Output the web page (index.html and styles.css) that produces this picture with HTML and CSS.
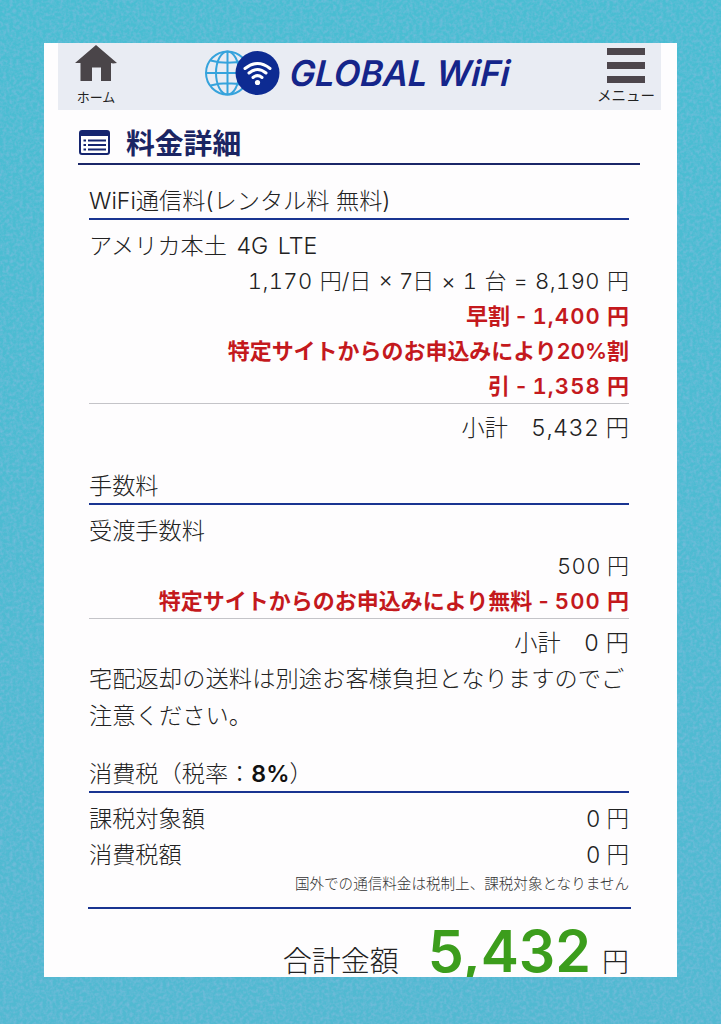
FILE: index.html
```
<!DOCTYPE html>
<html lang="ja">
<head>
    <meta charset="UTF-8">
    <meta name="viewport" content="width=device-width, initial-scale=1.0">
    <title>GLOBAL WiFi 料金詳細</title>
    <link rel="stylesheet" href="styles.css">
</head>
<body>
    <!-- Paper texture behind the card -->
    <svg class="texture" width="721" height="1024">
        <filter id="grain" x="0" y="0" width="100%" height="100%">
            <feTurbulence type="fractalNoise" baseFrequency="0.3" numOctaves="2" seed="4"/>
            <feColorMatrix type="matrix" values="0 0 0 0 0.27  0 0 0 0 0.5  0 0 0 0 0.75  1.1 0 0 0 -0.4"/>
        </filter>
        <rect width="721" height="1024" filter="url(#grain)"/>
    </svg>

    <div class="card">
        <header class="header">
            <div class="nav-item home">
                <svg width="42" height="37" viewBox="0 0 42 37">
                    <path d="M21 0 L42 18 L38 18.500 L36 18 V36 H26 V22.500 H17 V36 H5.500 V18 L0 18 Z" fill="#4a4549"/>
                </svg>
                <span class="home-label">ホーム</span>
            </div>
            <svg class="logo" width="312" height="60" viewBox="0 0 312 60">
                <g fill="none" stroke="#36a3dc" stroke-width="2">
                    <circle cx="24.500" cy="26" r="21.500"/>
                    <ellipse cx="24.500" cy="26" rx="11.500" ry="21.500"/>
                    <path d="M24.500 4.500 V47.500 M3 26 H46 M7.500 13.500 Q24.500 18 41.500 13.500 M7.500 38.500 Q24.500 34 41.500 38.500"/>
                </g>
                <circle cx="54.500" cy="26" r="22" fill="#0d2b92"/>
                <g fill="none" stroke="#fff" stroke-width="3" stroke-linecap="round">
                    <path d="M42 21.500 Q54.500 11.500 67 21.500"/>
                    <path d="M46 26 Q54.500 19 63 26"/>
                    <path d="M50 30.500 Q54.500 26.800 59 30.500"/>
                </g>
                <circle cx="54.500" cy="35.500" r="2.600" fill="#fff"/>
                <text class="logo-text" transform="translate(86 39) skewX(-4)" textLength="220" lengthAdjust="spacingAndGlyphs">GLOBAL WiFi</text>
            </svg>
            <div class="nav-item menu">
                <div class="bars"><i></i><i></i><i></i></div>
                <span class="menu-label">メニュー</span>
            </div>
        </header>

        <h1 class="title">
            <svg width="31" height="25" viewBox="0 0 31 25">
                <rect x="1" y="1" width="29" height="23" rx="2" fill="#fff" stroke="#15256f" stroke-width="2"/>
                <rect x="1" y="1" width="29" height="5" fill="#15256f"/>
                <path d="M9 10.500 H27 M9 15 H27 M9 19.500 H27" stroke="#15256f" stroke-width="2"/>
                <path d="M4.500 10.500 H7 M4.500 15 H7 M4.500 19.500 H7" stroke="#15256f" stroke-width="2"/>
            </svg>
            <span>料金詳細</span>
        </h1>

        <section class="section">
            <h2>WiFi通信料(レンタル料 無料)</h2>
            <div class="row area">アメリカ本土 4G LTE</div>
            <div class="amounts">
                <p class="calc"><span class="num">1,170</span> 円/日 × 7日 × <span class="num">1</span> 台 = <span class="num">8,190</span> 円</p>
                <p class="discount">早割 - <span class="num">1,400</span> 円</p>
                <p class="discount promo">特定サイトからのお申込みにより20%割</p>
                <p class="discount">引 - <span class="num">1,358</span> 円</p>
            </div>
            <p class="subtotal">小計　<span class="num">5,432</span> 円</p>
        </section>

        <section class="section fees">
            <h2>手数料</h2>
            <div class="row">受渡手数料</div>
            <div class="amounts">
                <p><span class="num">500</span> 円</p>
                <p class="discount">特定サイトからのお申込みにより無料 - <span class="num">500</span> 円</p>
            </div>
            <p class="subtotal">小計　<span class="num">0</span> 円</p>
            <p class="note">宅配返却の送料は別途お客様負担となりますのでご<br>注意ください。</p>
        </section>

        <section class="section tax">
            <h2>消費税（税率：<b>8%</b>）</h2>
            <div class="row"><span>課税対象額</span><span class="value">0 円</span></div>
            <div class="row"><span>消費税額</span><span class="value">0 円</span></div>
            <p class="small">国外での通信料金は税制上、課税対象となりません</p>
        </section>

        <div class="total">
            <span>合計金額</span>
            <strong>5,432</strong>
            <span class="yen">円</span>
        </div>
    </div>
</body>
</html>
```
FILE: styles.css
```
* {
    box-sizing: border-box;
}

body {
    margin: 0;
    height: 1024px;
    padding: 43px 44px 47px;
    overflow: hidden;
    background: linear-gradient(#49bdd2, #51b9d1);
    font-family: Inter, "Noto Sans CJK JP", sans-serif;
    font-weight: 300;
    color: #222;
}

h1, h2, p {
    margin: 0;
    font-weight: inherit;
}

.texture {
    position: absolute;
    top: 0;
    left: 0;
}

.card {
    position: relative;
    width: 633px;
    height: 934px;
    overflow: hidden;
    background: #fefdfe;
}

/* Header */
.header {
    display: flex;
    justify-content: space-between;
    width: 603px;
    height: 67px;
    margin-left: 14px;
    padding: 0 6px 0 17px;
    background: #e9ecf3;
}

.nav-item {
    display: flex;
    flex-direction: column;
    align-items: center;
    font-family: "Noto Sans CJK JP", sans-serif;
    font-weight: 400;
    line-height: 18px;
    white-space: nowrap;
}

.home {
    width: 42px;
    padding-top: 2px;
}

.home-label {
    margin-top: 6px;
    font-size: 13px;
}

.logo {
    margin: 4px 0 0 3px;
}

.logo-text {
    font-family: Inter, sans-serif;
    font-size: 35.5px;
    font-style: italic;
    font-weight: 600;
    fill: #15258a;
}

.menu {
    width: 58px;
    padding-top: 5px;
}

.bars {
    display: flex;
    flex-direction: column;
    gap: 7px;
    width: 38px;
}

.bars i {
    height: 7px;
    background: #4d464c;
}

.menu-label {
    margin-top: 3px;
    font-size: 14.5px;
}

/* Page title */
.title {
    display: flex;
    align-items: center;
    gap: 16px;
    width: 562px;
    height: 55px;
    margin-left: 34px;
    padding: 11px 0 0 1px;
    border-bottom: 2px solid #1b2768;
    font-family: "Noto Sans CJK JP", sans-serif;
    font-size: 28.8px;
    font-weight: 700;
    line-height: 42px;
    color: #1b2563;
}

/* Price sections */
.section {
    width: 540px;
    margin: 18px 0 0 45px;
    font-size: 23.2px;
}

.section h2 {
    height: 37px;
    border-bottom: 2px solid #193491;
    font-size: 23.2px;
    line-height: 36px;
    white-space: nowrap;
}

.row {
    display: flex;
    justify-content: space-between;
    margin-top: 8px;
    line-height: 36px;
}

.row + .row {
    margin-top: 0;
}

.area {
    word-spacing: 3px;
}

.value {
    font-size: 22.5px;
}

.num {
    font-variant-numeric: tabular-nums;
    letter-spacing: 0.4px;
}

.amounts {
    border-bottom: 1px solid #c4c4c8;
    font-size: 22px;
    line-height: 35px;
    text-align: right;
    white-space: nowrap;
}

.amounts p {
    height: 35px;
}

.amounts p:last-child {
    height: 34px;
}

.calc {
    word-spacing: 0.9px;
}

.discount {
    font-weight: 600;
    word-spacing: 0.6px;
    color: #c4191d;
}

.discount .num {
    letter-spacing: 1.1px;
}

.promo {
    letter-spacing: -0.03px;
}

.subtotal {
    margin-top: 6px;
    line-height: 36px;
    text-align: right;
}

.fees {
    margin-top: 22px;
}

.note {
    letter-spacing: 0.12px;
    line-height: 36.5px;
    white-space: nowrap;
}

.tax {
    margin-top: 22px;
}

.tax b {
    font-weight: 600;
    color: #111;
}

.small {
    font-size: 14.57px;
    line-height: 22px;
    text-align: right;
    color: #333;
}

.total {
    display: flex;
    justify-content: flex-end;
    align-items: baseline;
    width: 543px;
    margin: 12px 0 0 44px;
    padding-right: 2px;
    border-top: 2px solid #193491;
    font-size: 29px;
    line-height: 85px;
    color: #222;
}

.total strong {
    margin: 0 11px 0 29px;
    font-size: 57.3px;
    font-weight: 600;
    color: #3c9d1c;
}

.total .yen {
    font-size: 27px;
}
```
